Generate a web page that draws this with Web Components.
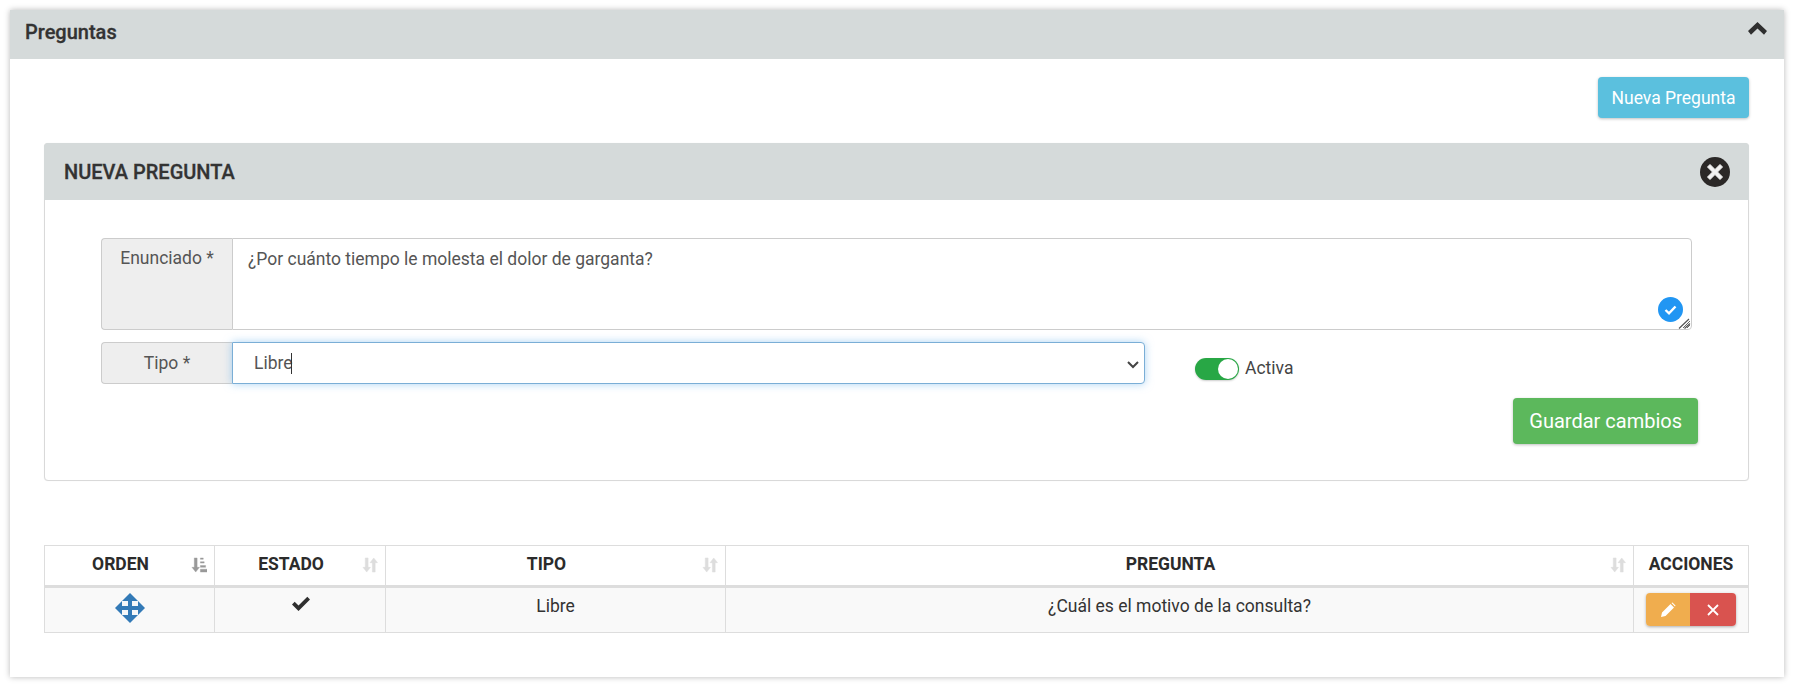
<!DOCTYPE html>
<html lang="es"><head><meta charset="utf-8"><title>Preguntas</title>
<style>
html,body{margin:0;background:#fff;}
body{font-family:Roboto,"Liberation Sans",sans-serif;color:#333;}
</style></head><body>
<questions-panel title-text="Preguntas">
  <ui-button slot="toolbar" kind="info">Nueva Pregunta</ui-button>
  <question-form></question-form>
  <questions-table></questions-table>
</questions-panel>
<script>
function def(name, html, init){
  customElements.define(name, class extends HTMLElement{
    constructor(){super();this.attachShadow({mode:'open'}).innerHTML=html;}
    connectedCallback(){ if(init) init(this); }
  });
}
def('ui-button',`<style>
:host{display:inline-block}
button{display:block;border:0;border-radius:4px;color:#fff;font:400 17.5px/24px Roboto,sans-serif;height:41px;padding:0 13.5px;box-shadow:0 1px 3px rgba(0,0,0,.25);background:#5bc0de}
:host([kind=success]) button{background:#5cb85c;font-size:20px;height:46px;padding:0 16px}
</style><button type="button"><slot></slot></button>`);

def('questions-panel',`<style>
:host{display:block;margin:10px;width:1774px;height:667px;background:#fff;box-shadow:0 0 6px rgba(0,0,0,.28)}
header{height:49px;background:#d5dada;display:flex;align-items:center;justify-content:space-between;padding:0 17px 0 15px;box-sizing:border-box;font:500 20px/24px Roboto,sans-serif;color:#333;-webkit-text-stroke:.3px #333}
header span{margin-top:-6px}
svg{display:block;margin-top:-12px}
.tools{display:flex;justify-content:flex-end;padding:18px 35px 25px}
.body{padding:0 35px 0 34px}
</style><header><span id="t"></span><svg width="19" height="13" viewBox="0 0 19 13"><path d="M9.500 0 19 9 16 12.800 9.500 6.500 3 12.800 0 9z" fill="#2f2f2f"/></svg></header>
<div class="tools"><slot name="toolbar"></slot></div><div class="body"><slot></slot></div>`,
el=>{el.shadowRoot.getElementById('t').textContent=el.getAttribute('title-text');});

def('question-form',`<style>
:host{display:block;box-sizing:border-box;width:1705px;height:338px;border:1px solid #d9d9d9;border-radius:4px;background:#fff;box-shadow:0 0 1px rgba(0,0,0,.1)}
*{box-sizing:border-box}
header{height:57px;margin:-1px -1px 0;background:#d5dada;border-radius:4px 4px 0 0;display:flex;align-items:center;justify-content:space-between;padding:0 19px 0 20px;font:500 20px/24px Roboto,sans-serif;color:#333;-webkit-text-stroke:.3px #333}
.close{width:30px;height:30px;display:block}
.form{padding:38px 0 0 56px}
.group{display:flex;font:400 17.5px/25px Roboto,sans-serif;color:#555}
.lab{width:131px;flex:none;background:#eee;border:1px solid #ccc;border-right:0;border-radius:4px 0 0 4px;text-align:center;padding:7px 0 0 0}
.ta{position:relative;width:1460px;height:92px}
textarea{display:block;width:100%;height:100%;border:1px solid #ccc;border-radius:0 4px 4px 0;padding:8px 15px;font:400 17.5px/25px Roboto,sans-serif;color:#555;resize:both;outline:0;background:#fff;margin:0}
.check{position:absolute;right:9px;bottom:8px;width:25px;height:25px}
.grip{position:absolute;right:1px;bottom:1px;pointer-events:none}
.row{margin-top:12px;align-items:flex-start}
.row .lab{height:42px;padding-top:8px}
.sel{position:relative;width:913px;height:42px}
select{display:block;width:100%;height:100%;border:1px solid #7aaed6;border-radius:0 4px 4px 0;padding:0 21px;font:400 17.5px Roboto,sans-serif;color:#555;background:#fff;outline:0;box-shadow:0 0 8px rgba(102,175,233,.55);margin:0;appearance:none;-webkit-appearance:none}
.caret{position:absolute;left:59px;top:11px;width:1px;height:21px;background:#333}
.chev{position:absolute;right:5px;top:18px;pointer-events:none}
.sw{display:flex;align-items:center;margin:16px 0 0 50px;font:400 17.5px/22px Roboto,sans-serif;color:#444;gap:6px}
.sw b{font-weight:400;margin-top:-3px}
.track{width:44px;height:22px;border-radius:11px;background:#28a745;position:relative;display:block;box-shadow:0 1px 2px rgba(0,0,0,.2)}
.track i{position:absolute;right:1px;top:1px;width:20px;height:20px;border-radius:50%;background:#fff}
.actions{display:flex;justify-content:flex-end;padding:14px 50px 0 0}
</style>
<header><span>NUEVA PREGUNTA</span>
<svg class="close" viewBox="0 0 30 30"><circle cx="15" cy="15" r="15" fill="#2b2827"/><path d="M10 7.500 15 12.500 20 7.500 22.500 10 17.500 15 22.500 20 20 22.500 15 17.500 10 22.500 7.500 20 12.500 15 7.500 10z" fill="#f2f2f2" stroke="#f2f2f2" stroke-linejoin="round"/></svg></header>
<div class="form">
<div class="group"><div class="lab">Enunciado *</div><div class="ta"><textarea>¿Por cuánto tiempo le molesta el dolor de garganta?</textarea>
<svg class="check" viewBox="0 0 25 25"><circle cx="12.500" cy="12.500" r="12.500" fill="#2196f3"/><path d="M7.500 13 11 16.300 17.500 9.500" fill="none" stroke="#fff" stroke-width="2.400"/></svg>
<svg class="grip" width="14" height="14" viewBox="0 0 14 14"><path d="M12 4 2 13.500M13 8.500 7.500 13.500" stroke="#555" stroke-width="1.200" fill="none"/></svg></div></div>
<div class="row group"><div class="lab">Tipo *</div><div class="sel"><select><option>Libre</option></select><span class="caret"></span><svg class="chev" width="14" height="9" viewBox="0 0 14 9"><path d="M2 2 7 7 12 2" fill="none" stroke="#444" stroke-width="2"/></svg></div>
<label class="sw"><span class="track"><i></i></span><b>Activa</b></label></div>
</div>
<div class="actions"><ui-button kind="success">Guardar cambios</ui-button></div>`);

const sortI=(c)=>`<svg class="s" width="16" height="16" viewBox="0 0 17 17" fill="${c}" stroke="${c}" stroke-width=".5"><path d="M3.500 1h3v10h2.500l-4 5-4-5h2.500z"/><path d="M12.500 1l4 5h-2.500v10h-3v-10h-2.500z" /></svg>`;
const sortA=`<svg class="s" width="16" height="16" viewBox="0 0 17 17" fill="#999" stroke="#999" stroke-width=".4"><path d="M3.500 1h3v10h2.500l-4 5-4-5h2.500z"/><path d="M10 1h3v1.500h-3zM10 5h4v1.500h-4zM10 9h5.500v2h-5.500zM10 13h7v3h-7z"/></svg>`;
def('questions-table',`<style>
:host{display:block;margin-top:64px;width:1704px}
*{box-sizing:border-box}
table{border-collapse:collapse;table-layout:fixed;width:1704px;font:400 17.5px/24px Roboto,sans-serif;color:#333}
th,td{border:1px solid #ddd;text-align:center;padding:0}
th{height:41px;font-weight:700;border-bottom:3px solid #ddd;position:relative;color:#2b2b2b;padding:0 18px 4px 0}
th:last-child{padding-right:0}
td{height:46px;background:#f9f9f9;vertical-align:top;padding-top:6px}
.s{position:absolute;right:7px;top:11px}
td svg{display:block;margin:auto}
.btns{display:flex;width:90px;margin:-1px auto 0;height:33px;border-radius:4px;overflow:hidden;box-shadow:0 1px 3px rgba(0,0,0,.3)}
.btns span{display:flex;align-items:center;justify-content:center}
.e{width:44px;background:#f0ad4e}.d{width:46px;background:#d9534f}
</style><table><colgroup><col style="width:170px"><col style="width:171px"><col style="width:340px"><col style="width:908px"><col style="width:115px"></colgroup>
<thead><tr><th>ORDEN${sortA}</th><th>ESTADO${sortI('#ddd')}</th><th>TIPO${sortI('#ddd')}</th><th>PREGUNTA${sortI('#ddd')}</th><th>ACCIONES</th></tr></thead>
<tbody><tr>
<td><svg width="30" height="30" viewBox="0 0 30 30" style="margin-top:-1px"><path d="M15 0 30 15 15 30 0 15z" fill="#337ab7"/><path d="M7 8h6v5H7zM17 8h6v5h-6zM7 17h6v5H7zM17 17h6v5h-6z" fill="#f5f7f9"/></svg></td>
<td><svg width="20" height="16" viewBox="0 0 20 16" style="margin-left:76px;margin-top:2px"><path d="M1 8.500 3.700 5.800 7.500 9.600 16.300.8 19 3.500 7.500 15z" fill="#2f2f2f"/></svg></td>
<td>Libre</td><td>¿Cuál es el motivo de la consulta?</td>
<td><div class="btns"><span class="e"><svg width="16" height="16" viewBox="0 0 16 16"><path d="M1 15 2 10.500 10.500 2 14 5.500 5.500 14zM11.500 1 12.500 .5 15.500 3.500 15 4.500z" fill="#fff"/></svg></span><span class="d"><svg width="14" height="14" viewBox="0 0 14 14"><path d="M2 2 12 12M12 2 2 12" stroke="#fff" stroke-width="1.800"/></svg></span></div></td>
</tr></tbody></table>`);
</script></body></html>
